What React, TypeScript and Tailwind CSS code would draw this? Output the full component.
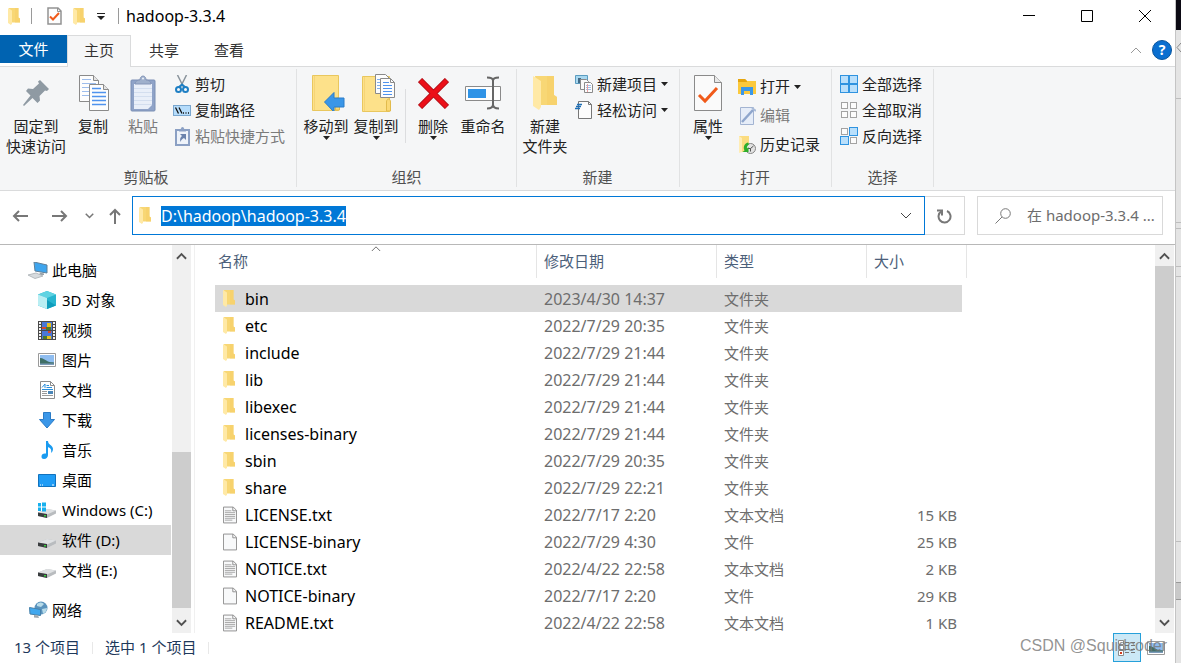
import type { ReactNode } from 'react';

const places = [
  { name: '3D 对象', icon: <CubeIcon /> },
  { name: '视频', icon: <VideoIcon /> },
  { name: '图片', icon: <PictureIcon /> },
  { name: '文档', icon: <DocumentsIcon /> },
  { name: '下载', icon: <DownloadIcon /> },
  { name: '音乐', icon: <MusicIcon /> },
  { name: '桌面', icon: <DesktopIcon /> },
  { name: 'Windows (C:)', icon: <DriveIcon system /> },
  { name: '软件 (D:)', icon: <DriveIcon />, active: true },
  { name: '文档 (E:)', icon: <DriveIcon /> },
];

const files = [
  { name: 'bin', date: '2023/4/30 14:37', type: '文件夹', size: '', kind: 'folder' },
  { name: 'etc', date: '2022/7/29 20:35', type: '文件夹', size: '', kind: 'folder' },
  { name: 'include', date: '2022/7/29 21:44', type: '文件夹', size: '', kind: 'folder' },
  { name: 'lib', date: '2022/7/29 21:44', type: '文件夹', size: '', kind: 'folder' },
  { name: 'libexec', date: '2022/7/29 21:44', type: '文件夹', size: '', kind: 'folder' },
  { name: 'licenses-binary', date: '2022/7/29 21:44', type: '文件夹', size: '', kind: 'folder' },
  { name: 'sbin', date: '2022/7/29 20:35', type: '文件夹', size: '', kind: 'folder' },
  { name: 'share', date: '2022/7/29 22:21', type: '文件夹', size: '', kind: 'folder' },
  { name: 'LICENSE.txt', date: '2022/7/17 2:20', type: '文本文档', size: '15 KB', kind: 'text' },
  { name: 'LICENSE-binary', date: '2022/7/29 4:30', type: '文件', size: '25 KB', kind: 'file' },
  { name: 'NOTICE.txt', date: '2022/4/22 22:58', type: '文本文档', size: '2 KB', kind: 'text' },
  { name: 'NOTICE-binary', date: '2022/7/17 2:20', type: '文件', size: '29 KB', kind: 'file' },
  { name: 'README.txt', date: '2022/4/22 22:58', type: '文本文档', size: '1 KB', kind: 'text' },
];

/* ---------- Icons ---------- */

function FolderIcon({ className = 'w-3 h-[17px]' }: { className?: string }) {
  return (
    <svg className={className} viewBox="0 0 24 34" preserveAspectRatio="none">
      <path d="M2 0h19v19l3 2v8H6z" fill="#f8d775" />
      <path d="M14 0h7v19l3 2v8H14z" fill="#f6cf68" opacity="0.6" />
      <path d="M0 0l8 5v26l-2 3-6-4z" fill="#ffe9a6" />
    </svg>
  );
}

function TextFileIcon({ lines }: { lines: boolean }) {
  return (
    <svg className="w-[15px] h-[18px]" viewBox="0 0 15 18" fill="none">
      <path d="M.5.5h10.5l3.5 3.5v13.5H.5z" fill="#f8f9fa" stroke="#8c8c8c" />
      <path d="M10.5.5v4h4" stroke="#8c8c8c" />
      {lines && <path d="M2 4.500h7M2 6.500h11M2 8.500h11M2 10.500h11M2 12.500h11M2 14.500h8" stroke="#a2a2a2" />}
    </svg>
  );
}

function CheckPageIcon({ className }: { className: string }) {
  return (
    <svg className={className} viewBox="0 0 28 36" fill="none">
      <path d="M.5.5h20l7 7v28H.5z" fill="#fafafa" stroke="#8a8a8a" />
      <path d="M20.500 .5v7h7" fill="#e8e8e8" stroke="#8a8a8a" />
      <path d="M5 20l6 6L23 13" stroke="#f05a1a" strokeWidth="3" />
    </svg>
  );
}

/* Toolbar-sized version with heavier strokes */
function SmallCheckPageIcon() {
  return (
    <svg className="w-[15px] h-[18px]" viewBox="0 0 15 18" fill="none">
      <path d="M1 1h10l3 3v13H1z" fill="#fdfdfd" stroke="#929292" strokeWidth="1.500" />
      <path d="M10.500 1v3.500h3.500" stroke="#929292" />
      <path d="M3 9.500l3 3L12 6" stroke="#f05a1a" strokeWidth="2" />
    </svg>
  );
}

function PinIcon() {
  return (
    <svg className="w-[26px] h-[26px]" viewBox="0 0 26 26" fill="#8f9aa3">
      <path d="M17 0l9 9-2 2-2-.5-5.500 5.500.5 4.500L14.500 23 9.500 18 1 26l-1-1 7.500-9.500L3 11l2-2.500 5 .5 6-5.500-1-2z" />
    </svg>
  );
}

function CopyIcon() {
  return (
    <svg className="w-[30px] h-9 translate-x-px" viewBox="0 0 30 36" fill="none">
      <path d="M.5.5h14l5 5v21H.5z" fill="#fdfdfd" stroke="#8a8a8a" />
      <path d="M14.500.5v5h5" fill="#e4e4e4" stroke="#8a8a8a" />
      <path d="M3 4.500h9M3 8.500h14M3 12.500h7M3 16.500h7M3 20.500h7" stroke="#9cbcec" />
      <path d="M10.500 9.500h14l5 5v21h-19z" fill="#fdfdfd" stroke="#8a8a8a" />
      <path d="M24.500 9.500v5h5" fill="#e4e4e4" stroke="#8a8a8a" />
      <path d="M13 13.500h9M13 17.500h14M13 21.500h14M13 25.500h14M13 29.500h14" stroke="#4f93ee" strokeWidth="1.300" />
    </svg>
  );
}

function PasteIcon() {
  return (
    <svg className="w-[26px] h-[37px]" viewBox="0 0 26 37" fill="none">
      <rect x="1" y="5" width="24" height="31" rx="1" fill="#8fa3c8" stroke="#7b8fb5" />
      <path d="M4 9h18v21l-4 4H4z" fill="#e9eff9" />
      <path d="M4 13.500h18M4 17.500h18M4 21.500h18M4 25.500h18M4 29.500h18" stroke="#d3deef" />
      <path d="M5 9c0-3 3-4 5-4 0-2 1-4 3-4s3 2 3 4c2 0 5 1 5 4z" fill="#9fb0cc" stroke="#8596b8" />
      <circle cx="13" cy="3.500" r="1" fill="#eef2f8" />
    </svg>
  );
}

function CutIcon() {
  return (
    <svg className="w-[14px] h-[18px]" viewBox="0 0 14 18" fill="none">
      <path d="M2.500 0l6 12M11.500 0l-6 12" stroke="#8a949c" strokeWidth="1.500" />
      <circle cx="3.500" cy="14.500" r="2.500" stroke="#1e7fc4" strokeWidth="2" />
      <circle cx="10.500" cy="14.500" r="2.500" stroke="#1e7fc4" strokeWidth="2" />
      <path d="M4 12l3-2.500 3 2.500" stroke="#1e7fc4" strokeWidth="2" />
    </svg>
  );
}

function CopyPathIcon() {
  return (
    <svg className="w-[18px] h-[11px]" viewBox="0 0 18 11" fill="none">
      <rect x=".5" y=".5" width="17" height="10" fill="#b5dcfb" stroke="#7aa7cf" />
      <path d="M2.500 2.500l3 6M6 2.500l3 6" stroke="#111" strokeWidth="1.300" />
      <path d="M10 8h1M12.500 8h1M15 8h1" stroke="#111" strokeWidth="1.300" />
    </svg>
  );
}

function PasteShortcutIcon() {
  return (
    <svg className="w-[15px] h-[19px]" viewBox="0 0 15 19" fill="none">
      <rect x="1" y="3" width="13" height="15" fill="#eef3fa" stroke="#8ba0c4" strokeWidth="2" />
      <path d="M4 4.500C4 2.500 6 2.500 6 1.500a1.500 1.500 0 013 0c0 1 2 1 2 3z" fill="#8ba0c4" />
      <path d="M5 7h6v6l-2-2c-2 1-3 2-3.500 4-1-3 0-5 1.500-6z" fill="#6b83ad" />
    </svg>
  );
}

function MoveToIcon() {
  return (
    <svg className="ml-1 w-[34px] h-9" viewBox="0 0 34 36" fill="none">
      <path d="M1.500.5h26v35h-26z" fill="#fde18a" stroke="#e9c75e" />
      <path d="M3.500 1v34" stroke="#f6d477" />
      <path d="M24.500 35V26c0-4 4-4 4 0v9z" fill="#fbd976" stroke="#e2bb4c" />
      <path d="M13.500 27L23 17.500v5.500h10v9H23v5z" fill="#3a96e8" stroke="#2b7cc9" />
    </svg>
  );
}

function CopyToIcon() {
  return (
    <svg className="ml-1 w-[34px] h-[38px]" viewBox="0 0 34 38" fill="none">
      <path d="M1.500 2.500h27v35h-27z" fill="#fde18a" stroke="#e9c75e" />
      <path d="M3.500 3v34" stroke="#f6d477" />
      <path d="M25.500 37V28c0-4 4-4 4 0v9z" fill="#fbd976" stroke="#e2bb4c" />
      <path d="M14.500.5h10l4 4v15h-14z" fill="#fdfdfd" stroke="#8a8a8a" />
      <path d="M16 5.500h6M16 8.500h4M16 11.500h4M16 14.500h4" stroke="#7fb0ee" />
      <path d="M19.500 4.500h10l4 4v15h-14z" fill="#fdfdfd" stroke="#8a8a8a" />
      <path d="M29.500 4.500v4h4" stroke="#8a8a8a" />
      <path d="M22 8.500h6M22 11.500h9M22 14.500h9M22 17.500h9M22 20.500h9" stroke="#4f93ee" />
    </svg>
  );
}

function DeleteIcon() {
  return (
    <svg className="w-[31px] h-[31px]" viewBox="0 0 31 31" fill="none">
      <path d="M2 2l27 27M29 2L2 29" stroke="#b5121b" strokeWidth="6" />
      <path d="M2.500 2.500l26 26M28.500 2.500l-26 26" stroke="#ec0f18" strokeWidth="4" />
    </svg>
  );
}

function RenameIcon() {
  return (
    <svg className="w-9 h-[34px]" viewBox="0 0 36 34" fill="none">
      <path d="M.5 10.500h35v14H.5z" fill="#fdfdfd" stroke="#8a8a8a" />
      <path d="M3 13h18v9H3z" fill="#2f93e6" />
      <path d="M22 1.500c4 0 6 .5 6 3v24c0 3-2 4-6 4M34 1.500c-4 0-6 .5-6 3v24c0 3 2 4 6 4" stroke="#666" strokeWidth="2" />
    </svg>
  );
}

function NewItemIcon() {
  return (
    <svg className="w-[18px] h-[18px]" viewBox="0 0 18 18" fill="none">
      <path d="M.5.5h12v8H.5z" fill="#a8d8f0" stroke="#5b9cc0" />
      <path d="M3 3h3v5H3z" fill="#446a86" />
      <path d="M5.500 4.500h6l2 2v8h-8z" fill="#fafafa" stroke="#8a8a8a" />
      <path d="M9.500 7.500h6l2 2v8h-8z" fill="#fdfdfd" stroke="#8a8a8a" />
      <path d="M11 10.500h5M11 12.500h5M11 14.500h5" stroke="#9fc0e8" />
      <path d="M12.500 9v8" stroke="#e8a0a0" />
    </svg>
  );
}

function EasyAccessIcon() {
  return (
    <svg className="w-[18px] h-[18px]" viewBox="0 0 18 18" fill="none">
      <path d="M3.500.5h10l3 3v14h-13z" fill="#fcfcfc" stroke="#777" />
      <path d="M13.500.5v3h3" stroke="#777" />
      <path d="M2 3.500h5M1 5.500h5M0 7.500h5" stroke="#1f6fb5" strokeWidth="1.300" />
    </svg>
  );
}

function OpenIcon() {
  return (
    <svg className="w-[18px] h-4" viewBox="0 0 18 16">
      <path d="M0 0h7l2 2h9v13H0z" fill="#fbc93d" />
      <path d="M0 0h7l2 2v1H0z" fill="#e5a50f" />
      <path d="M3 8h12v8h-3v-4H6v4H3z" fill="#3b97e8" />
    </svg>
  );
}

function EditIcon() {
  return (
    <svg className="w-[18px] h-[18px]" viewBox="0 0 18 18" fill="none">
      <path d="M2.500.5h13v17h-13z" fill="#e6edf8" stroke="#a3b4d2" />
      <path d="M4 15L15 3" stroke="#8fa6cc" strokeWidth="2.500" />
      <path d="M14 1l4 3" stroke="#a9bbd8" strokeWidth="2" />
    </svg>
  );
}

function HistoryIcon() {
  return (
    <svg className="w-[18px] h-[18px]" viewBox="0 0 18 18" fill="none">
      <path d="M1 0h10v13l-6 3H1z" fill="#fbdc80" />
      <path d="M1 0l3 2v14l-3 1z" fill="#ffedb5" />
      <circle cx="12.500" cy="12.500" r="5" fill="#e3e3e3" stroke="#858585" />
      <path d="M12.500 12.500l3-2.500M12.500 12.500v3M12.500 12.500H10" stroke="#555" />
      <path d="M10 6.500c-4 1-5 5-3.500 8l-2 1.500h6V11L9 12.500c-.5-2 .5-3 2-4z" fill="#2fae2b" />
    </svg>
  );
}

function GridIcon({ on }: { on: boolean[] }) {
  const spots = [[1, 1], [10, 1], [1, 10], [10, 10]];
  return (
    <svg className="w-[18px] h-[18px]" viewBox="0 0 18 18">
      {spots.map(([x, y], i) =>
        on[i] ? (
          <rect key={i} x={x - 0.5} y={y - 0.5} width="8" height="8" fill="#b9dffb" stroke="#2f93e0" />
        ) : (
          <rect key={i} x={x + 0.5} y={y + 0.5} width="6" height="6" fill="#fcfcfc" stroke="#a3a3a3" />
        )
      )}
    </svg>
  );
}

function CubeIcon() {
  return (
    <svg className="w-[18px] h-[18px]" viewBox="0 0 18 18">
      <path d="M9 0l9 3.500v11L9 18 0 14.500v-11z" fill="#27b5cf" />
      <path d="M9 0l9 3.500L9 7 0 3.500z" fill="#5fd3e2" />
      <path d="M0 3.500L9 7v11l-9-3.500z" fill="#b9eef3" />
      <path d="M9 9l9 5.500L9 18z" fill="#0f9dbc" />
    </svg>
  );
}

function VideoIcon() {
  return (
    <svg className="w-[18px] h-[19px]" viewBox="0 0 18 19">
      <path d="M0 0h18v19H0z" fill="#4a4a4a" />
      <path d="M4 1h10v8H4zM4 10h10v8H4z" fill="#4a78d8" />
      <path d="M9 2h4v4H9zM9 15h4v3H9z" fill="#e8c11c" />
      <path d="M4 6h4v2H4zM10 10h3v2h-3z" fill="#d9482b" />
      <path d="M8 6h5v3H8zM5 15h4v3H5z" fill="#4e7a2c" />
      <path d="M2 1v18M16 1v18" stroke="#f2f2f2" strokeWidth="2" strokeDasharray="2 1" />
    </svg>
  );
}

function PictureIcon() {
  return (
    <svg className="w-[18px] h-[14px]" viewBox="0 0 18 14">
      <path d="M.5.5h17v13H.5z" fill="#fff" stroke="#9a9a9a" />
      <path d="M2 2h14v10H2z" fill="#8fbdf0" />
      <path d="M2 5c3 0 5 2 8 3.500 2 1 4 .5 6 1V12H2z" fill="#3f6f67" />
      <path d="M2 10.500h14V12H2z" fill="#7d9cbb" />
    </svg>
  );
}

function DocumentsIcon() {
  return (
    <svg className="w-[15px] h-[18px]" viewBox="0 0 15 18" fill="none">
      <path d="M.5.5h10l4 4v13H.5z" fill="#fff" stroke="#8c8c8c" />
      <path d="M10.500.5v4h4" stroke="#8c8c8c" />
      <path d="M2 6.500L5 3v4M6.500 4.500H9M6.500 6.500H12M2 8.500h11" stroke="#2a8fdc" />
      <path d="M2 10.500h5M2 12.500h5M2 14.500h11" stroke="#9a9a9a" />
      <path d="M8 10h5v3H8z" fill="#4a86b8" />
    </svg>
  );
}

function DownloadIcon() {
  return (
    <svg className="w-4 h-[17px]" viewBox="0 0 16 17">
      <path d="M4.500.5h7v7h4L8 16 .5 7.500h4z" fill="#3b97e8" stroke="#2a7bc6" />
    </svg>
  );
}

function MusicIcon() {
  return (
    <svg className="w-3 h-[18px]" viewBox="0 0 12 18">
      <path d="M5 0h2c0 4 5 4 5 8 0 2-1 3-2 4 1-4-1-5-3-6v8c0 2-1.500 4-4 4-1.500 0-2.500-1-2.500-2.300C.5 13 2.500 12 5 12.500z" fill="#1a9bf0" />
    </svg>
  );
}

function DesktopIcon() {
  return (
    <svg className="w-[18px] h-[13px]" viewBox="0 0 18 13">
      <path d="M.5.5h17v12H.5z" fill="#1f9cf5" stroke="#1272bd" />
      <path d="M2 11h1M4 11h1M14 11h2" stroke="#fff" />
    </svg>
  );
}

function DriveIcon({ system = false }: { system?: boolean }) {
  return (
    <svg className="w-[18px] h-4" viewBox="0 0 18 16">
      <path d="M0 10.500L9 7l9 1.500v3L9 16l-9-2z" fill="#b9bcbf" />
      <path d="M0 10.500L9 7l9 1.500-9 4z" fill="#dfe1e3" />
      <path d="M0 10.500l9 1.500v4l-9-2z" fill="#3a3d3f" />
      <path d="M6 13h2v1.500H6z" fill="#37d03c" />
      {system && <path d="M0 1h3v3.500H0zM4 .5h4v4H4zM0 5.500h3V9H0zM4 5.500h4v4H4z" fill="#17b0ee" />}
    </svg>
  );
}

function ComputerIcon() {
  return (
    <svg className="w-5 h-[17px]" viewBox="0 0 20 17">
      <path d="M6 0l13 3v8L7 9z" fill="#3ea5ee" stroke="#5f7f97" />
      <path d="M12 10.500l4 1v1.500h-5z" fill="#9aa3aa" />
      <path d="M0 13l8-2 7 3-8 2.500z" fill="#d7dbde" stroke="#b5babe" />
    </svg>
  );
}

function NetworkIcon() {
  return (
    <svg className="w-[19px] h-[18px]" viewBox="0 0 19 18">
      <circle cx="12" cy="7" r="6.500" fill="#5a93bd" />
      <path d="M8 3c3-2 5-2 7 0l-3 3-4-1zM13 8l5-1c0 3-2 5-4 6z" fill="#b7dbe9" />
      <path d="M.5 6.500l11 2v6L1 13z" fill="#41a8ef" stroke="#4681aa" />
      <path d="M5 14l4 .5 1 2.500-5-.5z" fill="#9fa8ae" />
    </svg>
  );
}

function Chevron({ up = false, className }: { up?: boolean; className: string }) {
  return (
    <svg className={className} viewBox="0 0 12 8" fill="none" stroke="currentColor">
      <path d={up ? 'M1 7l5-5 5 5' : 'M1 1l5 5 5-5'} />
    </svg>
  );
}

function Caret() {
  return (
    <svg className="w-[7px] h-1" viewBox="0 0 7 4">
      <path d="M0 0h7L3.500 4z" fill="#222" />
    </svg>
  );
}

/* ---------- Ribbon pieces ---------- */

function RibbonGroup({ label, className, children }: { label: string; className: string; children: ReactNode }) {
  return (
    <section className={`flex shrink-0 flex-col border-r border-[#e1e2e3] ${className}`}>
      <div className="flex flex-1 items-start">{children}</div>
      <h2 className="pr-1 text-center leading-5 text-[#505050]">{label}</h2>
    </section>
  );
}

type LargeButtonProps = {
  icon: ReactNode;
  lines: string[];
  caret?: boolean;
  disabled?: boolean;
  className?: string;
};

function LargeButton({ icon, lines, caret, disabled, className = 'w-[50px]' }: LargeButtonProps) {
  return (
    <button
      disabled={disabled}
      className={`flex shrink-0 flex-col items-center pt-[5px] leading-5 whitespace-nowrap disabled:text-[#7b7b7b] ${className}`}
    >
      <span className="mb-1 flex h-[38px] items-center">{icon}</span>
      {lines.map((line) => (
        <span key={line}>{line}</span>
      ))}
      {caret && <Caret />}
    </button>
  );
}

function SmallButton({ icon, label, caret, disabled, tall }: { icon: ReactNode; label: string; caret?: boolean; disabled?: boolean; tall?: boolean }) {
  return (
    <button
      disabled={disabled}
      className={`flex items-center gap-1 whitespace-nowrap disabled:text-[#7b7b7b] ${tall ? 'h-[29px]' : 'h-[26px]'}`}
    >
      <span className="flex w-[18px] justify-center">{icon}</span>
      {label}
      {caret && <Caret />}
    </button>
  );
}

function Scrollbar({ children }: { children: ReactNode }) {
  return (
    <div className="flex w-[19px] shrink-0 flex-col bg-[#f0f0f0] text-[#505050]">
      <button aria-label="向上滚动" className="flex h-[21px] shrink-0 items-center justify-center">
        <Chevron up className="w-[11px] h-2 stroke-2" />
      </button>
      {children}
      <button aria-label="向下滚动" className="flex h-[25px] shrink-0 items-center justify-center pt-1">
        <Chevron className="w-[11px] h-2 stroke-2" />
      </button>
    </div>
  );
}

function PlaceRow({ icon, name, active, root }: { icon: ReactNode; name: string; active?: boolean; root?: boolean }) {
  return (
    <li>
      <a
        href="#"
        className={`flex h-[30px] items-center ${root ? 'gap-1 pl-7' : 'gap-1.5 pl-[38px]'} ${active ? 'bg-[#d9d9d9]' : ''}`}
      >
        <span className={`flex justify-center ${root ? 'w-5' : 'w-[18px]'}`}>{icon}</span>
        {name}
      </a>
    </li>
  );
}

/* ---------- Window ---------- */

function TitleBar() {
  return (
    <header className="flex h-[35px] shrink-0 items-center pb-[3px] pl-2">
      <FolderIcon />
      <span className="ml-[11px] h-4 w-px bg-[#9a9a9a]" />
      <button aria-label="属性" className="ml-[15px]">
        <SmallCheckPageIcon />
      </button>
      <button aria-label="新建文件夹" className="ml-[11px]">
        <FolderIcon />
      </button>
      <button aria-label="自定义快速访问工具栏" className="ml-3">
        <svg className="w-2 h-[7px]" viewBox="0 0 8 7">
          <path d="M0 0h8v1H0zM0 3h8L4 7z" fill="#222" />
        </svg>
      </button>
      <span className="ml-[13px] h-4 w-px bg-[#9a9a9a]" />
      <h1 className="ml-[7px] flex-1 text-base leading-5">hadoop-3.3.4</h1>
      <button aria-label="最小化" className="flex h-full w-[58px] items-center justify-center">
        <svg className="w-3 h-3" viewBox="0 0 12 12" stroke="#000">
          <path d="M0 5.500h12" />
        </svg>
      </button>
      <button aria-label="最大化" className="flex h-full w-[58px] items-center justify-center">
        <svg className="w-3 h-3" viewBox="0 0 12 12" stroke="#000" fill="none">
          <path d="M.5.5h11v11H.5z" />
        </svg>
      </button>
      <button aria-label="关闭" className="mr-px flex h-full w-[58px] items-center justify-center">
        <svg className="w-3 h-3" viewBox="0 0 12 12" stroke="#000">
          <path d="M0 0l12 12M12 0L0 12" />
        </svg>
      </button>
    </header>
  );
}

function RibbonTabs() {
  return (
    <nav className="flex h-8 shrink-0 border-b border-[#dadbdc] text-[#333]">
      <button className="h-7 w-[67px] bg-[#0063b1] text-white">文件</button>
      <button className="-mb-px w-16 border border-b-0 border-[#dadbdc] bg-[#f5f6f7] pb-0.5">主页</button>
      <button className="w-[66px] pb-px">共享</button>
      <button className="w-16 pb-px">查看</button>
      <div className="ml-auto flex items-center gap-2.5 pr-[3px] pb-0.5">
        <button aria-label="折叠功能区">
          <Chevron up className="w-3 h-2 text-[#999]" />
        </button>
        <button
          aria-label="帮助"
          className="size-5 rounded-full border border-[#0a559c] bg-[#0a6fd0] text-sm leading-4 font-bold text-white"
        >
          ?
        </button>
      </div>
    </nav>
  );
}

function Ribbon() {
  return (
    <div className="flex h-[124px] shrink-0 border-b border-[#dadbdc] bg-[#f5f6f7] pt-0.5 pb-[3px] text-[#222]">
      <RibbonGroup label="剪贴板" className="w-[297px]">
        <LargeButton icon={<PinIcon />} lines={['固定到', '快速访问']} className="ml-1 w-16" />
        <LargeButton icon={<CopyIcon />} lines={['复制']} />
        <LargeButton icon={<PasteIcon />} lines={['粘贴']} disabled />
        <div className="ml-[5px] pt-0.5">
          <SmallButton icon={<CutIcon />} label="剪切" />
          <SmallButton icon={<CopyPathIcon />} label="复制路径" />
          <SmallButton icon={<PasteShortcutIcon />} label="粘贴快捷方式" disabled />
        </div>
      </RibbonGroup>
      <RibbonGroup label="组织" className="w-[220px] pl-1">
        <LargeButton icon={<MoveToIcon />} lines={['移动到']} caret />
        <LargeButton icon={<CopyToIcon />} lines={['复制到']} caret />
        <span className="mt-5 ml-1 mr-0.5 h-[54px] w-px bg-[#dcdddf]" />
        <LargeButton icon={<DeleteIcon />} lines={['删除']} caret />
        <LargeButton icon={<RenameIcon />} lines={['重命名']} />
      </RibbonGroup>
      <RibbonGroup label="新建" className="w-[163px] pl-[3px]">
        <LargeButton icon={<FolderIcon className="w-6 h-[34px]" />} lines={['新建', '文件夹']} />
        <div className="ml-[5px] pt-0.5">
          <SmallButton icon={<NewItemIcon />} label="新建项目" caret />
          <SmallButton icon={<EasyAccessIcon />} label="轻松访问" caret />
        </div>
      </RibbonGroup>
      <RibbonGroup label="打开" className="w-[152px] pl-[3px]">
        <LargeButton icon={<CheckPageIcon className="w-7 h-9" />} lines={['属性']} caret />
        <div className="ml-[5px] pt-[3px]">
          <SmallButton icon={<OpenIcon />} label="打开" caret tall />
          <SmallButton icon={<EditIcon />} label="编辑" disabled tall />
          <SmallButton icon={<HistoryIcon />} label="历史记录" tall />
        </div>
      </RibbonGroup>
      <RibbonGroup label="选择" className="w-[102px] pr-1 pl-2">
        <div className="pt-0.5">
          <SmallButton icon={<GridIcon on={[true, true, true, true]} />} label="全部选择" />
          <SmallButton icon={<GridIcon on={[false, false, false, false]} />} label="全部取消" />
          <SmallButton icon={<GridIcon on={[false, true, true, false]} />} label="反向选择" />
        </div>
      </RibbonGroup>
    </div>
  );
}

function AddressBar() {
  return (
    <div className="flex h-[54px] shrink-0 items-center border-b border-[#b8b8b8] px-3 pb-1 text-[#777]">
      <button aria-label="后退">
        <svg className="w-4 h-3" viewBox="0 0 16 12" fill="none" stroke="currentColor" strokeWidth="2">
          <path d="M16 6H2M7 1L2 6l5 5" />
        </svg>
      </button>
      <button aria-label="前进" className="ml-6">
        <svg className="w-4 h-3" viewBox="0 0 16 12" fill="none" stroke="currentColor" strokeWidth="2">
          <path d="M0 6h14M9 1l5 5-5 5" />
        </svg>
      </button>
      <button aria-label="最近浏览的位置" className="ml-[17px]">
        <Chevron className="w-[9px] h-[6px] stroke-2" />
      </button>
      <button aria-label="上移" className="ml-[15px]">
        <svg className="w-3 h-4" viewBox="0 0 12 16" fill="none" stroke="currentColor" strokeWidth="2">
          <path d="M6 16V2M1 7l5-5 5 5" />
        </svg>
      </button>
      <div className="ml-[11px] flex h-[39px] flex-1 items-center border border-[#0078d7] pl-1.5">
        <FolderIcon />
        <input
          aria-label="地址"
          defaultValue="D:\hadoop\hadoop-3.3.4"
          className="ml-2.5 h-5 field-sizing-content bg-[#0078d7] text-base leading-5 text-white outline-none"
        />
        <button aria-label="以前的位置" className="mr-3 ml-auto">
          <Chevron className="w-3 h-2 text-[#444]" />
        </button>
      </div>
      <button aria-label="刷新" className="flex h-[39px] w-10 items-center justify-center border border-l-0 border-[#d9d9d9]">
        <svg className="w-[15px] h-4" viewBox="0 0 15 16" fill="none" stroke="currentColor" strokeWidth="2">
          <path d="M10 3a6 6 0 11-5.500.3" />
          <path d="M0 2.500h5v5" />
        </svg>
      </button>
      <label className="ml-3 flex h-[39px] w-[186px] items-center border border-[#d9d9d9] pl-[17px]">
        <svg className="w-4 h-4 shrink-0" viewBox="0 0 16 16" fill="none" stroke="currentColor">
          <circle cx="10.500" cy="5.500" r="4.800" />
          <path d="M7 9l-6.500 6.500" />
        </svg>
        <input
          aria-label="搜索"
          placeholder="在 hadoop-3.3.4 ..."
          className="ml-4 min-w-0 flex-1 outline-none placeholder:text-[#6d6d6d]"
        />
      </label>
    </div>
  );
}

function Sidebar() {
  return (
    <nav className="w-[171px] shrink-0 pt-2.5">
      <ul>
        <PlaceRow root icon={<ComputerIcon />} name="此电脑" />
        {places.map((place) => (
          <PlaceRow key={place.name} {...place} />
        ))}
      </ul>
      <ul className="pt-2.5">
        <PlaceRow root icon={<NetworkIcon />} name="网络" />
      </ul>
    </nav>
  );
}

function FileTable() {
  return (
    <table className="w-[752px] shrink-0 table-fixed border-collapse text-left">
      <thead className="text-[#4c607a]">
        <tr className="h-10 align-top">
          <th className="relative w-[322px] p-0 font-normal">
            <div className="h-[33px] border-r border-[#e5e5e5] pl-[3px] leading-[33px]">名称</div>
            <Chevron up className="absolute top-0 left-1/2 w-[10px] h-[7px] -translate-x-1/2 text-[#555]" />
          </th>
          <th className="w-[180px] p-0 font-normal">
            <div className="h-[33px] border-r border-[#e5e5e5] pl-[7px] leading-[33px]">修改日期</div>
          </th>
          <th className="w-[150px] p-0 font-normal">
            <div className="h-[33px] border-r border-[#e5e5e5] pl-[7px] leading-[33px]">类型</div>
          </th>
          <th className="w-[95px] p-0 font-normal">
            <div className="h-[33px] pl-[7px] leading-[33px]">大小</div>
          </th>
          <th className="w-[5px] p-0">
            <div className="h-[33px] border-r border-[#e5e5e5]" />
          </th>
        </tr>
      </thead>
      <tbody className="text-[#6d6d6d]">
        {files.map((file, index) => {
          const cell = index === 0 ? 'bg-[#d9d9d9]' : '';
          return (
            <tr key={file.name} className="h-[27px] leading-5">
              <td className={`p-0 ${cell}`}>
                <div className="flex items-center gap-2 pl-[7px] text-base leading-5 text-black">
                  <span className="flex w-[15px] pl-px">
                    {file.kind === 'folder' ? <FolderIcon /> : <TextFileIcon lines={file.kind === 'text'} />}
                  </span>
                  {file.name}
                </div>
              </td>
              <td className={`p-0 pl-[7px] text-base leading-5 ${cell}`}>{file.date}</td>
              <td className={`p-0 pl-[7px] ${cell}`}>{file.type}</td>
              <td className={`p-0 pr-[5px] text-right ${cell}`}>{file.size}</td>
              <td className="p-0" />
            </tr>
          );
        })}
      </tbody>
    </table>
  );
}

function StatusBar() {
  return (
    <footer className="relative flex h-[30px] shrink-0 items-center pr-2.5 pb-px pl-3.5 text-[#1e395b]">
      <span>13 个项目</span>
      <span className="mx-3 h-3 w-px bg-[#e8e8e8]" />
      <span>选中 1 个项目</span>
      <span className="mx-3 h-3 w-px bg-[#e8e8e8]" />
      <button
        aria-label="详细信息"
        className="ml-auto flex h-[29px] w-7 items-center justify-center border border-[#26a0da] bg-[#cbe8f6]"
      >
        <svg className="w-[18px] h-4" viewBox="0 0 18 16" fill="none">
          <path d="M.5.5h5v4h-5zM.5 5.500h5v4h-5zM.5 10.500h5v5h-5z" fill="#fff" stroke="#8a8a8a" />
          <path d="M2 12h2v2H2z" fill="#d23a1a" />
          <path d="M7 2.500h4M13 2.500h4M7 5.500h4M13 5.500h4M7 9.500h4M13 9.500h4M7 12.500h4M13 12.500h4" stroke="#777" />
        </svg>
      </button>
      <button aria-label="大缩略图" className="ml-1.5">
        <PictureIcon />
      </button>
      {/* Watermark sits over the view buttons */}
      <span className="pointer-events-none absolute right-2 bottom-[7px] font-['Liberation_Sans',sans-serif] text-base leading-5 text-[#777]/80">
        CSDN @Squidcoder
      </span>
    </footer>
  );
}

export default function App() {
  return (
    <div className="flex h-screen overflow-hidden bg-[#e4e4e4] font-['Noto_Sans','Noto_Sans_CJK_SC',sans-serif] text-[15px] text-black">
      <main className="flex min-w-0 flex-1 flex-col bg-white">
        <TitleBar />
        <RibbonTabs />
        <Ribbon />
        <AddressBar />
        <div className="flex min-h-0 flex-1 overflow-hidden">
          <Sidebar />
          <div className="flex pl-px">
            <Scrollbar>
              <span className="flex-[186]" />
              <span className="flex-[156] bg-[#cdcdcd]" />
            </Scrollbar>
          </div>
          <div className="ml-[3px] flex min-w-0 flex-1 overflow-hidden border-l border-[#f0f0f0] pl-5">
            <FileTable />
          </div>
          <div className="flex pr-px">
            <Scrollbar>
              <span className="flex-1 bg-[#cdcdcd]" />
            </Scrollbar>
          </div>
        </div>
        <StatusBar />
      </main>
      {/* Sliver of the window behind */}
      <aside className="flex w-1.5 shrink-0 flex-col border-l border-[#c4c4c4]">
        <span className="h-[30px] bg-[#0c0a14]" />
        <span className="flex h-[69px] items-start border-b border-[#bdbdbd] pt-3">
          <svg className="w-[5px] h-[11px]" viewBox="0 0 5 11" fill="none" stroke="#888">
            <path d="M5 1L1 5.500 5 10" />
          </svg>
        </span>
        <span className="h-[124px] border-b border-[#bdbdbd]" />
        <span className="h-1.5 border-b border-[#bdbdbd]" />
        <span className="h-[38px] border-b border-[#bdbdbd]" />
        <span className="h-2.5 border-b border-[#bdbdbd]" />
        <span className="h-[265px] border-b border-[#bdbdbd]" />
        <span className="h-10" />
        <span className="h-[18px] border-y border-[#999] bg-[#c9c9c9]" />
      </aside>
    </div>
  );
}
